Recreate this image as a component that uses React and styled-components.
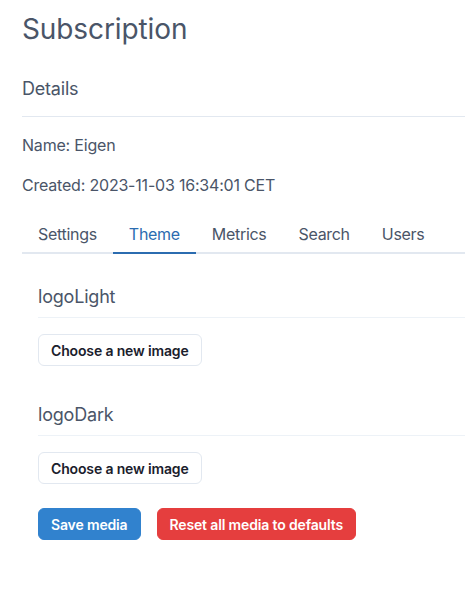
import styled, { createGlobalStyle } from "styled-components";

const GlobalStyle = createGlobalStyle`
  html, body {
    margin: 0;
    padding: 0;
    background: #ffffff;
    overflow: hidden;
  }
  body {
    font-family: Inter, "Liberation Sans", sans-serif;
    color: #4a5568;
    letter-spacing: -0.2px;
  }
  * {
    box-sizing: border-box;
  }
`;

const Page = styled.div`
  padding: 10px 0 0 22px;
  width: 465px;
`;

const Title = styled.h1`
  margin: 0;
  font-size: 28px;
  line-height: 38px;
  font-weight: 400;
  color: #4a5568;
  letter-spacing: -0.1px;
`;

const SectionHead = styled.h2`
  margin: 29px 0 0;
  font-size: 18px;
  line-height: 24px;
  font-weight: 400;
  padding-bottom: 15px;
  border-bottom: 1px solid #e2e8f0;
`;

const Line = styled.p`
  margin: 16px 0 0;
  font-size: 16px;
  line-height: 24px;
`;

const TabList = styled.div`
  display: flex;
  margin-top: 17px;
  border-bottom: 2px solid #e2e8f0;
`;

const Tab = styled.button`
  background: none;
  border: none;
  border-bottom: 2px solid ${(p) => (p.$active ? "#2b6cb0" : "transparent")};
  margin-bottom: -2px;
  padding: 8px 16px;
  height: 40px;
  font-family: inherit;
  font-size: 16px;
  line-height: 24px;
  letter-spacing: -0.3px;
  color: ${(p) => (p.$active ? "#2b6cb0" : "#4a5568")};
  cursor: pointer;
`;

const Panel = styled.div`
  padding: 16px 0 0 16px;
`;

const FieldHead = styled.h3`
  margin: ${(p) => (p.$first ? "13px" : "35px")} 0 0;
  font-size: 18px;
  line-height: 28px;
  font-weight: 400;
  padding-bottom: 6px;
  border-bottom: 1px solid #edf2f7;
`;

const Button = styled.button`
  height: 32px;
  padding: 0 12px;
  border-radius: 6px;
  font-family: inherit;
  font-size: 14px;
  font-weight: 600;
  letter-spacing: -0.15px;
  cursor: pointer;
  border: 1px solid ${(p) => (p.$bg ? p.$bg : "#e2e8f0")};
  background: ${(p) => p.$bg || "#ffffff"};
  color: ${(p) => (p.$bg ? "#ffffff" : "#1a202c")};
`;

const ChooseRow = styled.div`
  margin-top: 16px;
`;

const Actions = styled.div`
  display: flex;
  gap: 16px;
  margin-top: 24px;
`;

const tabs = ["Settings", "Theme", "Metrics", "Search", "Users"];

export default function App() {
  return (
    <Page>
      <GlobalStyle />
      <Title>Subscription</Title>
      <SectionHead>Details</SectionHead>
      <Line>Name: Eigen</Line>
      <Line>Created: 2023-11-03 16:34:01 CET</Line>
      <TabList>
        {tabs.map((t) => (
          <Tab key={t} $active={t === "Theme"}>
            {t}
          </Tab>
        ))}
      </TabList>
      <Panel>
        <FieldHead $first>logoLight</FieldHead>
        <ChooseRow>
          <Button>Choose a new image</Button>
        </ChooseRow>
        <FieldHead>logoDark</FieldHead>
        <ChooseRow>
          <Button>Choose a new image</Button>
        </ChooseRow>
        <Actions>
          <Button $bg="#3182ce">Save media</Button>
          <Button $bg="#e53e3e">Reset all media to defaults</Button>
        </Actions>
      </Panel>
    </Page>
  );
}
